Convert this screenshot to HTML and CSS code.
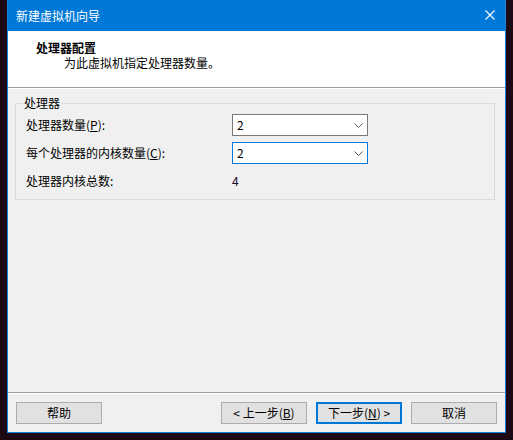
FILE: index.html
```html
<!DOCTYPE html>
<html lang="zh-CN">
<head>
<meta charset="utf-8">
<title>新建虚拟机向导</title>
<link rel="stylesheet" href="styles.css">
</head>
<body>
<div class="window">
  <div class="titlebar">
    <span class="title">新建虚拟机向导</span>
    <svg class="close" width="10" height="10" viewBox="0 0 10 10"><path d="M0.5 0.5 L9.5 9.5 M9.5 0.5 L0.5 9.5" stroke="#fff" stroke-width="1.1" fill="none"/></svg>
  </div>
  <div class="header">
    <div class="h-title">处理器配置</div>
    <div class="h-sub">为此虚拟机指定处理器数量。</div>
  </div>
  <div class="main">
    <fieldset class="group">
      <legend class="legend">处理器</legend>
      <div class="grid">
        <div class="label">处理器数量(<u>P</u>):</div>
        <div class="combo">
          <span>2</span>
          <svg class="chev" width="9" height="5" viewBox="0 0 9 5"><path d="M0.5 0.5 L4.5 4.5 L8.5 0.5" stroke="#5a5a5a" stroke-width="1" fill="none"/></svg>
        </div>
        <div class="label">每个处理器的内核数量(<u>C</u>):</div>
        <div class="combo focus">
          <span>2</span>
          <svg class="chev" width="9" height="5" viewBox="0 0 9 5"><path d="M0.5 0.5 L4.5 4.5 L8.5 0.5" stroke="#5a5a5a" stroke-width="1" fill="none"/></svg>
        </div>
        <div class="label">处理器内核总数:</div>
        <div class="value">4</div>
      </div>
    </fieldset>
  </div>
  <div class="footer">
    <div class="btn">帮助</div>
    <div class="btn back">&lt; 上一步(<u>B</u>)</div>
    <div class="btn default">下一步(<u>N</u>) &gt;</div>
    <div class="btn">取消</div>
  </div>
</div>
</body>
</html>
```
FILE: styles.css
```css
html, body {
  margin: 0;
  padding: 0;
}
body {
  width: 513px;
  height: 440px;
  background: #1c0913;
  font-family: "Noto Sans CJK SC", "Noto Sans", sans-serif;
  font-size: 12px;
  color: #000;
  overflow: hidden;
}
.window {
  margin-left: 7px;
  width: 497px;
  height: 432px;
  border: 1px solid #1a82d8;
  border-top: none;
  background: #f0f0f0;
  display: flex;
  flex-direction: column;
}
.titlebar {
  height: 31px;
  background: #0078d7;
  display: flex;
  align-items: center;
  justify-content: space-between;
  padding-left: 8px;
  color: #fff;
  line-height: 16px;
}
.close {
  margin-right: 10px;
  margin-top: -2px;
}
.header {
  background: #fff;
  border-bottom: 1px solid #a0a0a0;
  box-shadow: 0 1px 0 #fff;
  padding-left: 28px;
  box-sizing: border-box;
  height: 57px;
  padding-top: 9px;
  line-height: 16px;
}
.h-title {
  font-weight: bold;
}
.h-sub {
  padding-left: 28px;
  margin-top: -1px;
}
.main {
  flex: 1;
  padding-top: 8px;
}
.group {
  margin: 0 10px 0 7px;
  border: 1px solid #dcdcdc;
  padding: 4px 10px 7px 10px;
  min-width: 0;
}
.legend {
  padding: 0 1px;
  margin-left: -3px;
  line-height: 14px;
}
.grid {
  display: grid;
  grid-template-columns: 206px 136px;
  grid-auto-rows: 22px;
  row-gap: 6px;
  align-items: center;
}
.label {
  line-height: 16px;
}
.combo {
  height: 22px;
  box-sizing: border-box;
  background: #fff;
  border: 1px solid #7a7a7a;
  display: flex;
  align-items: center;
  justify-content: space-between;
  padding: 0 4px 0 4px;
  line-height: 16px;
}
.combo.focus {
  border-color: #0078d7;
}
.chev {
  margin-top: 1px;
}
.value {
  color: #1a0a2a;
  line-height: 16px;
}
.footer {
  border-top: 1px solid #a0a0a0;
  box-shadow: inset 0 1px 0 #fff;
  padding: 9px 8px 8px 8px;
  display: flex;
  gap: 9px;
}
.btn {
  width: 86px;
  height: 22px;
  box-sizing: border-box;
  background: #e1e1e1;
  border: 1px solid #adadad;
  display: flex;
  align-items: center;
  justify-content: center;
  line-height: 16px;
}
.btn.back {
  margin-left: auto;
}
.btn.default {
  border: 2px solid #0078d7;
}
```
